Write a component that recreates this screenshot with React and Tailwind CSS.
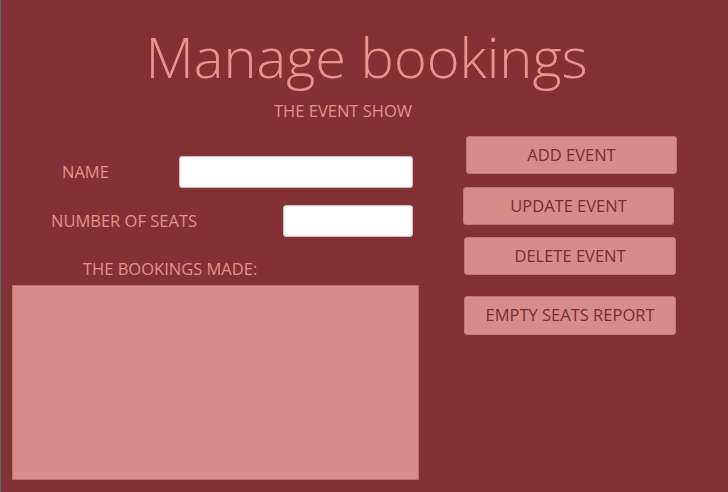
import React from "react";

export default function App() {
  return (
    <div className="w-[728px] h-[492px] bg-[#833135] border-l border-[#5d6868] overflow-hidden font-['Open_Sans',_'Noto_Sans',_sans-serif] flex flex-col">
      <h1 className="text-[#e8958e] text-[56px] font-light leading-none h-[56px] text-center pt-0 mt-[28px] pl-[4px]">
        Manage bookings
      </h1>
      <div className="text-[#e3928c] text-[16.5px] leading-[17px] h-[17px] mt-[18px] pl-[273px]">THE EVENT SHOW</div>
      <div className="flex flex-1">
        <div className="w-[418px] flex flex-col">
          <div className="flex items-center mt-[37px] h-[32px]">
            <span className="text-[#e3928c] text-[16.5px] ml-[61px]">NAME</span>
            <input className="ml-auto w-[234px] h-[32px] bg-white rounded-[3px] border border-[#c9c3c3] shadow-[inset_0_0_2px_rgba(0,0,0,0.15)] mr-[6px]" />
          </div>
          <div className="flex items-center mt-[17px] h-[32px]">
            <span className="text-[#e3928c] text-[16.5px] ml-[50px]">NUMBER OF SEATS</span>
            <input className="ml-auto w-[130px] h-[32px] bg-white rounded-[3px] border border-[#c9c3c3] shadow-[inset_0_0_2px_rgba(0,0,0,0.15)] mr-[6px]" />
          </div>
          <div className="text-[#e3928c] text-[16.5px] leading-[17px] h-[17px] ml-[82px] mt-[23px]">THE BOOKINGS MADE:</div>
          <div className="ml-[11px] mt-[8px] w-[407px] h-[195px] bg-[#d78b8b] border border-[#c06f70]"></div>
        </div>
        <div className="flex flex-col mt-[17px]">
          <button className="ml-[47px] w-[211px] h-[38px] bg-[#d78b8b] border border-[#c27676] rounded-[3px] text-[#7c2c31] text-[16.5px]">ADD EVENT</button>
          <button className="ml-[44px] mt-[13px] w-[211px] h-[38px] bg-[#d78b8b] border border-[#c27676] rounded-[3px] text-[#7c2c31] text-[16.5px]">UPDATE EVENT</button>
          <button className="ml-[45px] mt-[12px] w-[212px] h-[38px] bg-[#d78b8b] border border-[#c27676] rounded-[3px] text-[#7c2c31] text-[16.5px]">DELETE EVENT</button>
          <button className="ml-[45px] mt-[21px] w-[212px] h-[39px] bg-[#d78b8b] border border-[#c27676] rounded-[3px] text-[#7c2c31] text-[16.5px]">EMPTY SEATS REPORT</button>
        </div>
      </div>
    </div>
  );
}
